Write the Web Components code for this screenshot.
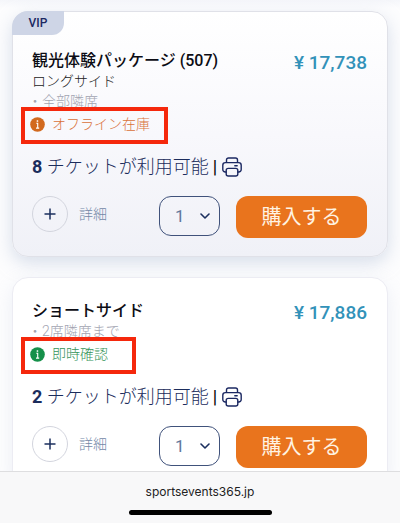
<!DOCTYPE html>
<html lang="ja">
<head>
<meta charset="utf-8">
<meta name="viewport" content="width=device-width, initial-scale=1">
<title>チケット</title>
<style>
html, body { margin: 0; height: 100%; }
body { font-family: Roboto, "Noto Sans CJK JP", sans-serif; background: #fcfcfe; color: #0c0c14; }
</style>
</head>
<body>
<ticket-page>
  <ticket-card tone="shaded" tag="VIP" price="¥ 17,738" count="8">
    <span slot="title">観光体験パッケージ (507)</span>
    <span slot="side">ロングサイド</span>
    <span slot="note">・全部隣席</span>
    <stock-status slot="status" kind="offline">オフライン在庫</stock-status>
  </ticket-card>
  <ticket-card price="¥ 17,886" count="2">
    <span slot="title">ショートサイド</span>
    <span slot="note">・2席隣席まで</span>
    <stock-status slot="status" kind="instant">即時確認</stock-status>
  </ticket-card>
  <browser-bar slot="bar">sportsevents365.jp</browser-bar>
</ticket-page>

<template id="page">
  <style>
    :host { display: flex; flex-direction: column; height: 100vh; }
    main { flex: 1; min-height: 0; overflow: hidden; box-sizing: border-box; padding: 11px 12px 0;
      display: flex; flex-direction: column; gap: 20px;
      background: linear-gradient(#f5f6fa, #fdfdfe 8px); }
  </style>
  <main><slot></slot></main>
  <slot name="bar"></slot>
</template>

<template id="card">
  <style>
    :host { display: block; flex: none; position: relative; box-sizing: border-box; padding: 23px 20px 18px 19px;
      border: 1px solid #ececf3; border-radius: 16px; background: #fff; box-shadow: 0 6px 18px #c3cce04d; }
    :host([tone="shaded"]) { padding-top: 39px; border-color: #e0e1e8;
      background: linear-gradient(#fff, #f8f8fc 50%, #f0f1f7); box-shadow: 0 6px 18px #b4c1d880; }
    .tag { position: absolute; top: -1px; left: -1px; box-sizing: border-box; width: 52px; height: 24px;
      border-radius: 16px 0 12px 0; background: #ced5e6; color: #1b2862; font-size: 12px; font-weight: 500;
      line-height: 24px; text-align: center; }
    .tag[hidden] { display: none; }
    h2 { margin: 0; font-size: 16px; line-height: 20px; font-weight: 500; }
    .price { color: #3292b9; font-size: 19px; line-height: 24px; font-weight: 500; white-space: nowrap; }
    .info { display: flex; flex-direction: column; }
    .top { display: flex; justify-content: space-between; align-items: flex-start; }
    .side, .note { font-size: 14px; line-height: 20px; font-weight: 300; }
    .side { color: #222; }
    .note { color: #a2a4b1; }
    .note ::slotted(span) { margin-left: -4px; }
    .status { display: block; margin-top: 3px; }
    .count { display: flex; align-items: center; margin: 21px 0 17px; height: 24px; font-size: 18px; line-height: 24px;
      font-weight: 300; color: #1b2c5c; white-space: pre; }
    .count b { font-weight: 700; }
    .bar { color: #000; font-weight: 400; margin: 0 5px 0 4px; }
    .printer { width: 20px; height: 20px; }
    .actions { display: flex; align-items: flex-start; }
    .details { display: flex; align-items: center; gap: 11px; padding: 0; border: 0; background: none; font: inherit;
      font-size: 14px; line-height: 20px; font-weight: 300; color: #7389a8; }
    .plus { display: flex; align-items: center; justify-content: center; box-sizing: border-box; width: 36px; height: 36px;
      border: 1px solid #d3d5de; border-radius: 50%; }
    .plus svg { width: 12px; height: 12px; }
    .qty { position: relative; margin-left: auto; }
    select { appearance: none; box-sizing: border-box; display: block; width: 61px; height: 40px; padding: 0 0 0 15px;
      border: 1px solid #40527b; border-radius: 12px; background: transparent; color: #61789c;
      font: inherit; font-size: 17px; font-weight: 400; }
    .qty svg { position: absolute; right: 10px; top: 15px; width: 10px; height: 10px; pointer-events: none; }
    .buy { width: 131px; height: 42px; margin-left: 16px; padding: 0; border: 0; border-radius: 12px; background: #e9741d;
      color: #fff3e2; font: inherit; font-size: 20px; line-height: 42px; font-weight: 400; }
  </style>
  <div class="tag"></div>
  <div class="top">
    <div class="info">
      <h2><slot name="title"></slot></h2>
      <div class="side"><slot name="side"></slot></div>
      <div class="note"><slot name="note"></slot></div>
    </div>
    <div class="price"></div>
  </div>
  <div class="status"><slot name="status"></slot></div>
  <div class="count"><b></b> チケットが利用可能<span class="bar">|</span><svg class="printer" viewBox="0 0 20 20" fill="none" stroke="#1b2862" stroke-width="1.4" stroke-linejoin="round" stroke-linecap="round"><path d="M4.5 5.600V3A2 2 0 0 1 6.500 1h7A2 2 0 0 1 15.500 3V5.600M4.200 15H3.200A2.400 2.400 0 0 1 .8 12.600V8.200A2.600 2.600 0 0 1 3.400 5.600H16.600A2.600 2.600 0 0 1 19.200 8.200V12.600A2.400 2.400 0 0 1 16.800 15H15.800M12.800 8.800H15.200"/><rect x="4.200" y="11.400" width="11.600" height="7.600" rx="2"/></svg></div>
  <div class="actions">
    <button class="details" type="button"><span class="plus"><svg viewBox="0 0 12 12" stroke="#1b2f5e" stroke-width="1.500"><path d="M6 .5v11M.5 6h11"/></svg></span><span>詳細</span></button>
    <div class="qty">
      <select aria-label="枚数"><option>1</option><option>2</option></select>
      <svg viewBox="0 0 10 10" fill="none" stroke="#1b2f5e" stroke-width="1.600" stroke-linecap="round" stroke-linejoin="round"><path d="M1 3l4 4 4-4"/></svg>
    </div>
    <button class="buy" type="button">購入する</button>
  </div>
</template>

<template id="status">
  <style>
    :host { position: relative; display: inline-flex; align-items: center; gap: 7px; margin-left: -2px; height: 20px;
      font-size: 14px; line-height: 20px; font-weight: 300; color: var(--tone); vertical-align: top; }
    :host([kind="offline"]) { --tone: #d9713a; --badge: #d2691e; --reach: -18px; }
    :host([kind="instant"]) { --tone: #35945a; --badge: #15904a; --reach: -28px; }
    :host::after { content: ""; position: absolute; top: -7px; bottom: -10px; left: -9px; right: var(--reach);
      border: 4px solid #f5280c; }
    svg { width: 15px; height: 15px; }
    circle { fill: var(--badge); }
  </style>
  <svg viewBox="0 0 15 15"><circle cx="7.500" cy="7.500" r="7.300"/><path d="M6.300 6.300h1.400v4.700M6 11.100h3.200" fill="none" stroke="#fff" stroke-width="1.100"/><rect x="6.700" y="3.300" width="1.500" height="1.500" fill="#fff"/></svg>
  <slot></slot>
</template>

<template id="bar">
  <style>
    :host { display: flex; flex-direction: column; align-items: center; flex: none; box-sizing: border-box; height: 52px;
      padding-top: 10px; border-top: 1px solid #dedee0; background: #f8f8f9; position: relative; gap: 8px;
      font: 12px/20px Inter, "Noto Sans CJK JP", sans-serif; color: #222; }
    .home { width: 143px; height: 5px; border-radius: 3px; background: #000; }
  </style>
  <div><slot></slot></div>
  <div class="home"></div>
</template>

<script>
class Base extends HTMLElement {
  constructor() {
    super();
    this.attachShadow({ mode: 'open' })
      .append(document.getElementById(this.constructor.template).content.cloneNode(true));
  }
}
customElements.define('ticket-page', class extends Base { static template = 'page'; });
customElements.define('stock-status', class extends Base { static template = 'status'; });
customElements.define('browser-bar', class extends Base { static template = 'bar'; });
customElements.define('ticket-card', class extends Base {
  static template = 'card';
  connectedCallback() {
    const find = s => this.shadowRoot.querySelector(s);
    find('.tag').textContent = this.getAttribute('tag') || '';
    find('.tag').hidden = !this.hasAttribute('tag');
    find('.side').hidden = !this.querySelector('[slot="side"]');
    find('.price').textContent = this.getAttribute('price');
    find('.count b').textContent = this.getAttribute('count');
  }
});
</script>
</body>
</html>
